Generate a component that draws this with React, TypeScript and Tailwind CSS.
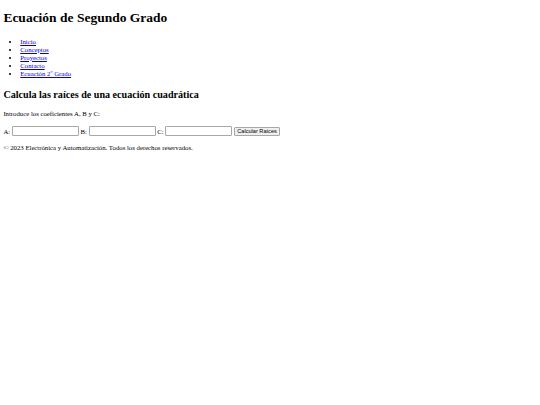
import React from "react";

export default function App() {
  const links = ["Inicio", "Conceptos", "Proyectos", "Contacto", "Ecuación 2º Grado"];
  return (
    <div className="bg-white w-[540px] h-[405px] overflow-hidden p-[3.375px] text-black" style={{ fontFamily: '"Liberation Serif", "Times New Roman", serif' }}>
      <header>
        <h1 className="text-[13.5px] font-bold leading-[15.5px] mt-[6.5px] mb-[12.4px]">Ecuación de Segundo Grado</h1>
        <nav>
          <ul className="list-disc pl-[16.875px] my-0 text-[6.75px] leading-[8px]">
            {links.map((l) => (
              <li key={l}>
                <a href="#" className="text-[#0000EE] underline">{l}</a>
              </li>
            ))}
          </ul>
        </nav>
      </header>
      <main>
        <h2 className="text-[10.125px] font-bold leading-[11.6px] mt-[11.3px] mb-0">Calcula las raíces de una ecuación cuadrática</h2>
        <p className="text-[6.75px] leading-[7.8px] mt-[9.4px] mb-0">Introduce los coeficientes A, B y C:</p>
        <form className="text-[6.75px] leading-[7.8px] mt-[8.6px] mb-0 flex items-center">
          <span>A:&nbsp;</span>
          <input type="text" className="w-[67px] h-[10px] border border-[#a8a8a8] rounded-[1px] bg-white" />
          <span>&nbsp;B:&nbsp;</span>
          <input type="text" className="w-[67px] h-[10px] border border-[#a8a8a8] rounded-[1px] bg-white" />
          <span>&nbsp;C:&nbsp;</span>
          <input type="text" className="w-[67px] h-[10px] border border-[#a8a8a8] rounded-[1px] bg-white" />
          <span>&nbsp;</span>
          <button type="button" className="w-[46px] h-[9px] mt-[1px] border border-[#a8a8a8] rounded-[1px] bg-[#efefef] text-[5.625px] leading-none whitespace-nowrap flex items-center justify-center" style={{ fontFamily: '"Liberation Sans", Arial, sans-serif' }}>Calcular Raíces</button>
        </form>
      </main>
      <footer>
        <p className="text-[6.75px] leading-[7.8px] mt-[7.6px] mb-0">© 2023 Electrónica y Automatización. Todos los derechos reservados.</p>
      </footer>
    </div>
  );
}
